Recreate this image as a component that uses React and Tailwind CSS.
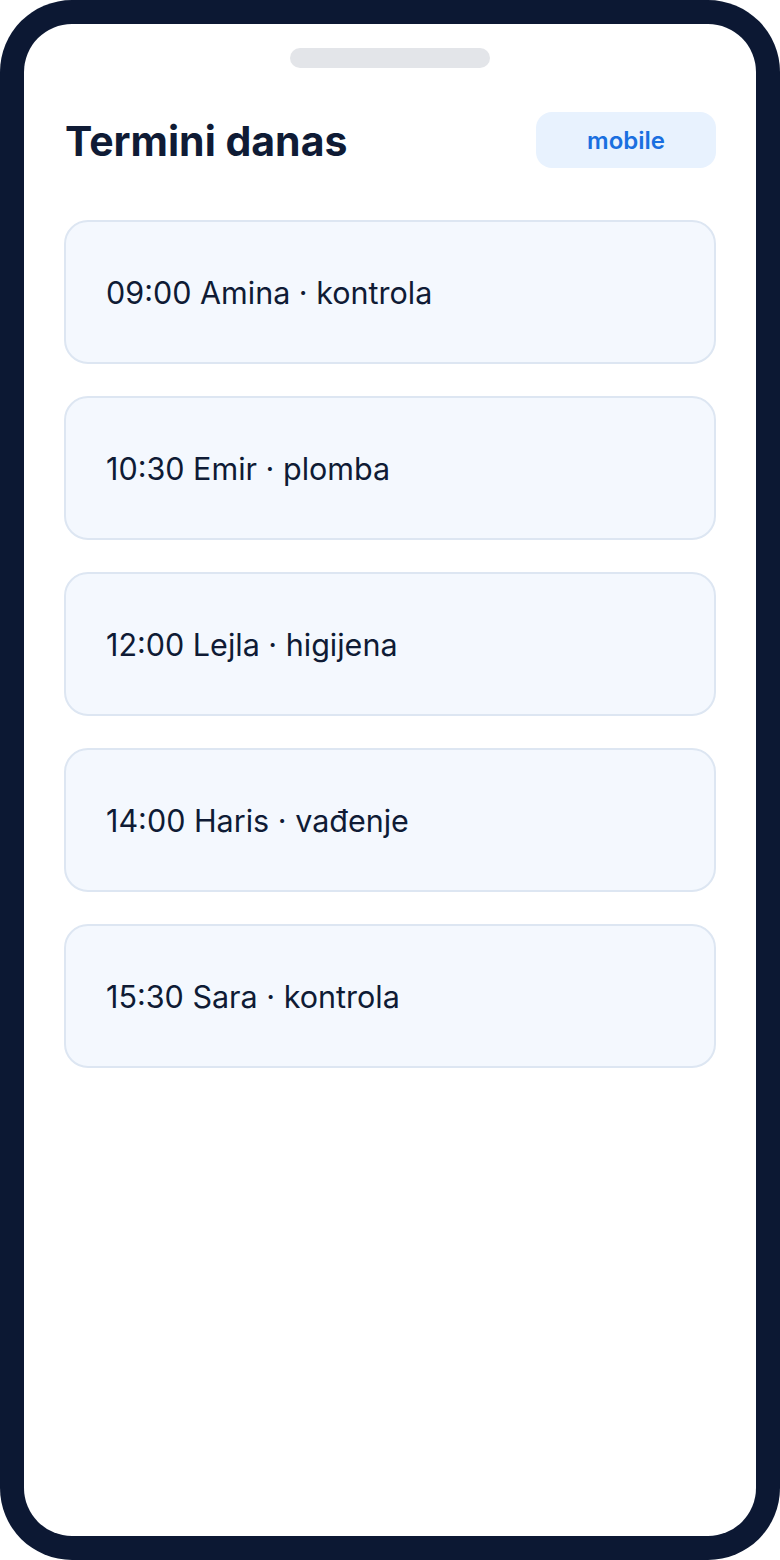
import React from 'react';

const appointments = [
  '09:00 Amina · kontrola',
  '10:30 Emir · plomba',
  '12:00 Lejla · higijena',
  '14:00 Haris · vađenje',
  '15:30 Sara · kontrola',
];

const AppointmentCard = ({ label }) => (
  <div className="h-[144px] flex items-center px-10 rounded-[24px] border-2 border-[#dde6f2] bg-[#f4f8fe]">
    <span className="text-[30.5px] leading-none pt-[2px] text-[#0f1b35]">{label}</span>
  </div>
);

function App() {
  return (
    <div className="bg-white" style={{ fontFamily: 'Inter, "Noto Sans", sans-serif' }}>
      <div className="w-[780px] h-[1560px] rounded-[72px] bg-[#0c1833] p-6">
        <div className="h-full bg-white rounded-[48px] px-10 pt-6">
          {/* Notch */}
          <div className="mx-auto w-[200px] h-5 rounded-full bg-[#e3e5e9]"></div>

          {/* Header */}
          <div className="mt-[44px] h-14 flex items-center justify-between">
            <h1 className="pl-[1px] pt-[2px] text-[41px] leading-none font-bold text-[#0f1b35]">Termini danas</h1>
            <div className="w-[180px] h-14 rounded-2xl bg-[#e8f2fe] flex items-center justify-center">
              <span className="text-[24px] leading-none pt-[2px] font-semibold text-[#1a6fe0]">mobile</span>
            </div>
          </div>

          {/* List */}
          <div className="mt-[52px] flex flex-col gap-8">
            {appointments.map((a) => (
              <AppointmentCard key={a} label={a} />
            ))}
          </div>
        </div>
      </div>
    </div>
  );
}

export default App;
